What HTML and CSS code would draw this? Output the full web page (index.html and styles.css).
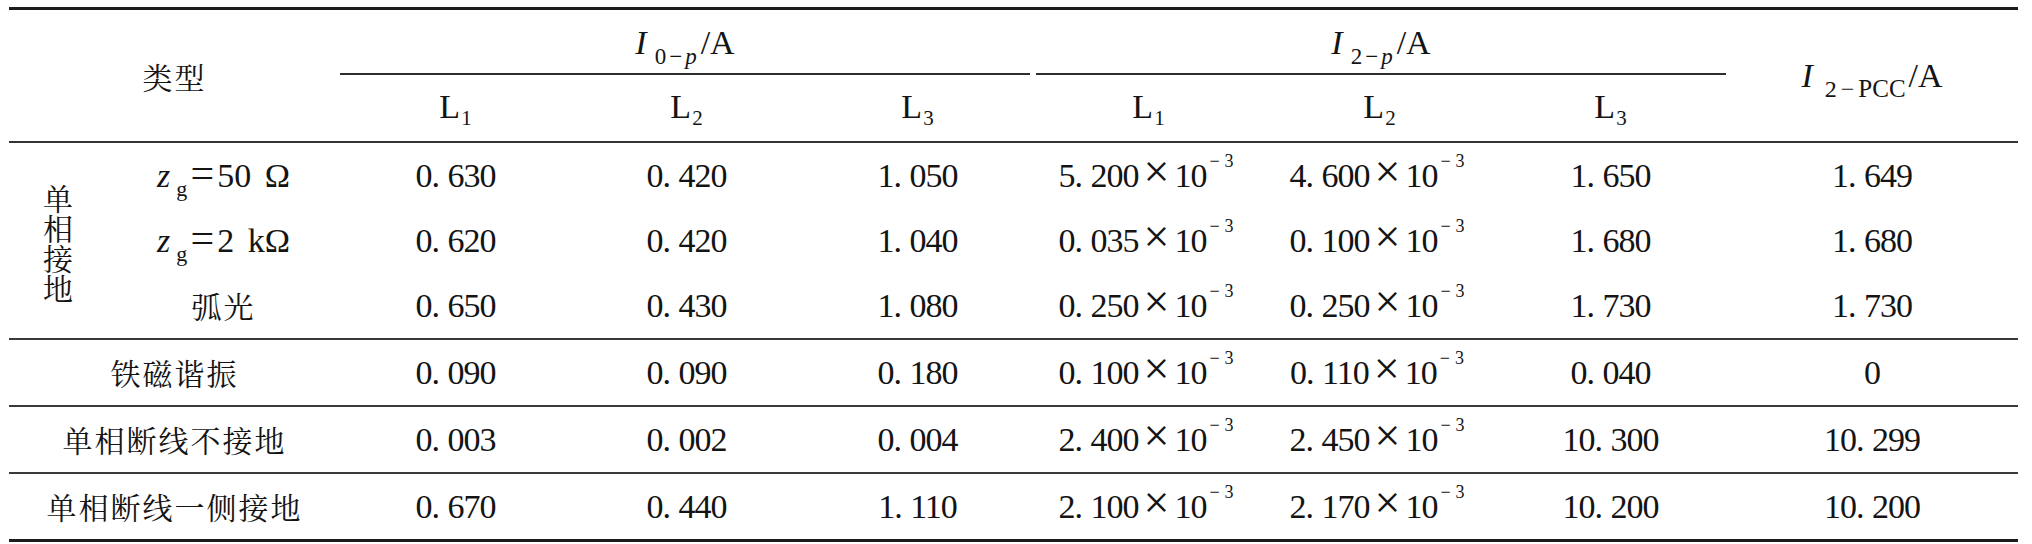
FILE: index.html
```html
<!DOCTYPE html>
<html lang="zh">
<head>
<meta charset="utf-8">
<title>表</title>
<link rel="stylesheet" href="styles.css">
</head>
<body>
<div class="tbl">
  <div class="grid head">
    <div class="c span2 cjk"><span>类型</span></div>
    <div class="c g g1"><span><i>I</i><span class="s">0−<i>p</i></span>/A</span></div>
    <div class="c g g2"><span><i>I</i><span class="s">2−<i>p</i></span>/A</span></div>
    <div class="c pcc"><span><i>I</i><span class="s sp">2−<span class="pc">PCC</span></span>/A</span></div>
    <div class="c l"><span>L<span class="sl">1</span></span></div>
    <div class="c l"><span>L<span class="sl">2</span></span></div>
    <div class="c l"><span>L<span class="sl">3</span></span></div>
    <div class="c l"><span>L<span class="sl">1</span></span></div>
    <div class="c l"><span>L<span class="sl">2</span></span></div>
    <div class="c l"><span>L<span class="sl">3</span></span></div>
  </div>

  <div class="grid sec sec1">
    <div class="vert cjk">单相接地</div>
    <div class="v lab"><i>z</i><span class="sg">g</span><span class="eq">=</span>50 Ω</div>
    <div class="v">0<span class="d">.</span>630</div>
    <div class="v">0<span class="d">.</span>420</div>
    <div class="v">1<span class="d">.</span>050</div>
    <div class="v">5<span class="d">.</span>200<span class="x">×</span>10<span class="e">−3</span></div>
    <div class="v">4<span class="d">.</span>600<span class="x">×</span>10<span class="e">−3</span></div>
    <div class="v">1<span class="d">.</span>650</div>
    <div class="v">1<span class="d">.</span>649</div>

    <div class="v lab"><i>z</i><span class="sg">g</span><span class="eq">=</span>2 kΩ</div>
    <div class="v">0<span class="d">.</span>620</div>
    <div class="v">0<span class="d">.</span>420</div>
    <div class="v">1<span class="d">.</span>040</div>
    <div class="v">0<span class="d">.</span>035<span class="x">×</span>10<span class="e">−3</span></div>
    <div class="v">0<span class="d">.</span>100<span class="x">×</span>10<span class="e">−3</span></div>
    <div class="v">1<span class="d">.</span>680</div>
    <div class="v">1<span class="d">.</span>680</div>

    <div class="v cjk">弧光</div>
    <div class="v">0<span class="d">.</span>650</div>
    <div class="v">0<span class="d">.</span>430</div>
    <div class="v">1<span class="d">.</span>080</div>
    <div class="v">0<span class="d">.</span>250<span class="x">×</span>10<span class="e">−3</span></div>
    <div class="v">0<span class="d">.</span>250<span class="x">×</span>10<span class="e">−3</span></div>
    <div class="v">1<span class="d">.</span>730</div>
    <div class="v">1<span class="d">.</span>730</div>
  </div>

  <div class="grid sec">
    <div class="v span2 cjk">铁磁谐振</div>
    <div class="v">0<span class="d">.</span>090</div>
    <div class="v">0<span class="d">.</span>090</div>
    <div class="v">0<span class="d">.</span>180</div>
    <div class="v">0<span class="d">.</span>100<span class="x">×</span>10<span class="e">−3</span></div>
    <div class="v">0<span class="d">.</span>110<span class="x">×</span>10<span class="e">−3</span></div>
    <div class="v">0<span class="d">.</span>040</div>
    <div class="v">0</div>
  </div>

  <div class="grid sec">
    <div class="v span2 cjk">单相断线不接地</div>
    <div class="v">0<span class="d">.</span>003</div>
    <div class="v">0<span class="d">.</span>002</div>
    <div class="v">0<span class="d">.</span>004</div>
    <div class="v">2<span class="d">.</span>400<span class="x">×</span>10<span class="e">−3</span></div>
    <div class="v">2<span class="d">.</span>450<span class="x">×</span>10<span class="e">−3</span></div>
    <div class="v">10<span class="d">.</span>300</div>
    <div class="v">10<span class="d">.</span>299</div>
  </div>

  <div class="grid sec last">
    <div class="v span2 cjk">单相断线一侧接地</div>
    <div class="v">0<span class="d">.</span>670</div>
    <div class="v">0<span class="d">.</span>440</div>
    <div class="v">1<span class="d">.</span>110</div>
    <div class="v">2<span class="d">.</span>100<span class="x">×</span>10<span class="e">−3</span></div>
    <div class="v">2<span class="d">.</span>170<span class="x">×</span>10<span class="e">−3</span></div>
    <div class="v">10<span class="d">.</span>200</div>
    <div class="v">10<span class="d">.</span>200</div>
  </div>
</div>
</body>
</html>
```

FILE: styles.css
```css
html, body {
  margin: 0;
  padding: 0;
  background: #ffffff;
}

body {
  width: 2032px;
  height: 544px;
  overflow: hidden;
  font-family: "Liberation Serif", "Times New Roman", "Noto Serif CJK SC", "Noto Sans CJK SC", serif;
  font-size: 34px;
  color: #141414;
}

.tbl {
  margin: 7px 0 0 9px;
  width: 2009px;
  border-top: 3px solid #1c1c1c;
  border-bottom: 3px solid #1c1c1c;
}

.grid {
  display: grid;
  grid-template-columns: 98px 233px repeat(6, 231px) 292px;
}

.head {
  grid-template-rows: 65px 66px;
  border-bottom: 2px solid #333333;
}

.sec {
  grid-template-rows: 65px;
  border-bottom: 2px solid #3a3a3a;
}

.sec1 {
  grid-template-rows: repeat(3, 65px);
}

.sec.last {
  border-bottom: none;
}

.c {
  display: flex;
  align-items: center;
  justify-content: center;
  white-space: nowrap;
}

.v {
  text-align: center;
  line-height: 65px;
  white-space: nowrap;
  letter-spacing: -1px;
}

.lab {
  letter-spacing: 0;
  word-spacing: 5px;
}

.span2 {
  grid-column: 1 / 3;
  grid-row: 1 / 3;
}

.sec .span2 {
  grid-row: auto;
}

.g {
  grid-row: 1;
  border-bottom: 2px solid #2e2e2e;
  padding-top: 2px;
}

.g1 {
  grid-column: 3 / 6;
  margin-right: 3px;
}

.g2 {
  grid-column: 6 / 9;
  margin-left: 3px;
}

.pcc {
  grid-column: 9;
  grid-row: 1 / 3;
}

.l {
  padding-bottom: 2px;
}

.cjk {
  font-family: "Noto Serif CJK SC", "Noto Sans CJK SC", "Liberation Serif", serif;
  font-size: 30px;
  letter-spacing: 2px;
}

.vert {
  grid-column: 1;
  grid-row: 1 / 4;
  display: flex;
  align-items: center;
  justify-content: center;
  text-align: center;
}

.sec1 .vert {
  width: 30px;
  justify-self: center;
  line-height: 30px;
  letter-spacing: 0;
  word-break: break-all;
  padding-top: 2px;
}

i {
  font-style: italic;
}

.s {
  font-size: 23px;
  line-height: 0;
  vertical-align: -10px;
  margin-left: 8px;
  margin-right: 1px;
  letter-spacing: 3px;
}

.s.sp {
  font-size: 24px;
  margin-left: 12px;
  letter-spacing: 4px;
  margin-right: 0;
}

.pc {
  font-size: 25px;
  letter-spacing: 0;
  margin-right: 3px;
}

.sl {
  font-size: 21px;
  line-height: 0;
  vertical-align: -7px;
  margin-left: 1px;
}

.sg {
  font-size: 22px;
  line-height: 0;
  vertical-align: -9px;
  margin-left: 6px;
  letter-spacing: 0;
}

.eq {
  display: inline-block;
  width: 30px;
  text-align: center;
  font-size: 42px;
  line-height: 0;
  letter-spacing: 0;
}

.d {
  display: inline-block;
  width: 16px;
  text-align: left;
  line-height: 0;
}

.x {
  display: inline-block;
  width: 36px;
  text-align: center;
  font-size: 46px;
  line-height: 0;
  letter-spacing: 0;
}

.e {
  font-size: 18px;
  line-height: 0;
  vertical-align: 20px;
  margin-left: 3px;
  letter-spacing: 5px;
}
```
